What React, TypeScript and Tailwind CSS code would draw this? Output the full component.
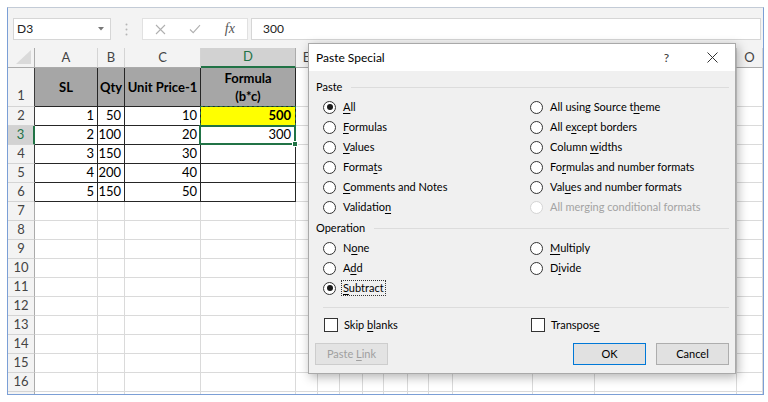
import React from 'react';

// column letters after the row header; O takes the rest of the width
const COLS = ['A', 'B', 'C', 'D', 'E', 'F', 'G', 'H', 'I', 'J', 'K', 'L', 'M', 'N', 'O'];
// F..N sit under the dialog, their letters never show
const HIDDEN = ['F', 'G', 'H', 'I', 'J', 'K', 'L', 'M', 'N'];
const ROWS = Array.from({ length: 16 }, (_, i) => i + 1);

const DATA: Record<number, string[]> = {
  2: ['1', '50', '10', '500'],
  3: ['2', '100', '20', '300'],
  4: ['3', '150', '30', ''],
  5: ['4', '200', '40', ''],
  6: ['5', '150', '50', ''],
};

// underlined access key
const K = ({ children }: { children: React.ReactNode }) => (
  <span className="underline underline-offset-[2px]">{children}</span>
);

const Radio = ({
  label,
  checked,
  disabled,
  focus,
}: {
  label: React.ReactNode;
  checked?: boolean;
  disabled?: boolean;
  focus?: boolean;
}) => (
  <div className="flex items-center h-[20px]">
    <span
      className={`w-[13px] h-[13px] rounded-full border bg-white flex items-center justify-center shrink-0 ${
        disabled ? 'border-[#d4d4d4]' : 'border-[#333333]'
      }`}
    >
      {checked && <span className="w-[6px] h-[6px] rounded-full bg-[#1a1a1a]" />}
    </span>
    <span
      className={`ml-[5px] px-px leading-[14px] border ${focus ? 'border-dotted border-[#333333]' : 'border-transparent'} ${
        disabled ? 'text-[#a3a3a3]' : 'text-black'
      }`}
    >
      {label}
    </span>
  </div>
);

const Check = ({ label }: { label: React.ReactNode }) => (
  <div className="flex items-center h-[20px]">
    <span className="w-[14px] h-[14px] border border-[#333333] bg-white shrink-0" />
    <span className="ml-[6px] text-black">{label}</span>
  </div>
);

const GroupHead = ({ title }: { title: string }) => (
  <div className="flex items-center gap-[9px] h-[16px]">
    <span className="text-black">{title}</span>
    <span className="flex-1 h-px bg-[#dcdcdc]" />
  </div>
);

const cellClass = (r: number, c: number) => {
  const inTable = r <= 6 && c <= 4;
  if (r === 1 && inTable)
    return 'flex items-center justify-center text-center font-bold leading-[18px] text-black bg-[#a6a6a6] border-r border-b border-[#262626]';
  if (r === 2 && c === 4)
    return 'relative flex items-center justify-end pr-[4px] font-bold text-black bg-[#ffff00] border-r border-b border-[#262626]';
  if (r === 3 && c === 4)
    return 'relative flex items-center justify-end pr-[4px] text-black bg-white border-r border-b border-[#262626]';
  if (inTable) return 'flex items-center justify-end pr-[3px] text-black bg-white border-r border-b border-[#262626]';
  return 'bg-white border-r border-b border-[#dadada]';
};

const headerText: Record<number, React.ReactNode> = {
  1: 'SL',
  2: 'Qty',
  3: 'Unit Price-1',
  4: (
    <>
      Formula
      <br />
      (b*c)
    </>
  ),
};

const Sheet = () => (
  <div className="grid grid-cols-[27px_63px_27px_76px_95px_22px_22px_23px_21px_24px_21px_24px_80px_62px_142px_1fr] grid-rows-[20px_39px_repeat(15,19px)] flex-1 overflow-hidden font-['Lato',sans-serif] text-[13px]">
    {/* corner */}
    <div className="bg-[#f3f3f3] border-r border-b border-[#ababab] flex items-end justify-end">
      <svg width="18" height="16" viewBox="0 0 18 16" className="mr-[2px] mb-[2px]">
        <polygon points="17,1 17,15 2,15" fill="#dadada" />
      </svg>
    </div>
    {COLS.map((l, i) =>
      i === 3 ? (
        <div
          key={l}
          className="bg-[#d2d2d2] text-[#217346] border-r border-r-[#ababab] border-b-2 border-b-[#217346] flex items-center justify-center"
        >
          {l}
        </div>
      ) : (
        <div
          key={l}
          className="bg-[#f3f3f3] text-[#444444] border-r border-r-[#d4d4d4] border-b border-b-[#ababab] flex items-center justify-center overflow-hidden"
        >
          {HIDDEN.includes(l) ? null : l}
        </div>
      )
    )}
    {ROWS.map((r) => (
      <React.Fragment key={r}>
        {r === 3 ? (
          <div className="bg-[#d2d2d2] text-[#217346] border-b border-b-[#d4d4d4] border-r-2 border-r-[#217346] flex items-center justify-center">
            {r}
          </div>
        ) : r === 1 ? (
          <div className="bg-[#f3f3f3] text-[#444444] border-b border-b-[#d4d4d4] border-r border-r-[#3a3a3a] flex items-end justify-center pb-[1px]">
            {r}
          </div>
        ) : r <= 6 ? (
          <div className="bg-[#f3f3f3] text-[#444444] border-b border-b-[#d4d4d4] border-r border-r-[#3a3a3a] flex items-center justify-center">
            {r}
          </div>
        ) : (
          <div className="bg-[#f3f3f3] text-[#444444] border-b border-b-[#d4d4d4] border-r border-r-[#ababab] flex items-center justify-center">
            {r}
          </div>
        )}
        {COLS.map((l, i) => {
          const c = i + 1;
          const text = r === 1 ? headerText[c] : DATA[r]?.[c - 1];
          return (
            <div key={l} className={cellClass(r, c)}>
              {text}
              {r === 2 && c === 4 && (
                <span className="absolute -top-px -left-px -right-px -bottom-px border border-dashed border-[#217346] z-10" />
              )}
              {r === 3 && c === 4 && (
                <span className="absolute -top-px -left-[2px] -right-px -bottom-px border-2 border-[#217346] z-10">
                  <span className="absolute -right-[4px] -bottom-[4px] w-[6px] h-[6px] bg-[#217346] border border-white" />
                </span>
              )}
            </div>
          );
        })}
      </React.Fragment>
    ))}
    {/* partly shown row under 16 */}
    <div className="bg-[#f3f3f3] border-r border-[#ababab]" />
    {COLS.map((l) => (
      <div key={l} className="bg-white border-r border-[#dadada]" />
    ))}
  </div>
);

const FormulaBar = () => (
  <div className="h-[40px] shrink-0 bg-[#f3f3f3] flex items-start pt-[10px] pl-[5px] pr-[2px] font-['Lato',sans-serif] text-[12px] text-[#222222]">
    <div className="w-[98px] h-[22px] bg-white border border-[#d6d6d6] flex items-center pl-[3px] pr-[6px]">
      <span>D3</span>
      <svg width="6" height="4" viewBox="0 0 6 4" className="ml-auto">
        <polygon points="0,0 6,0 3,3.5" fill="#777777" />
      </svg>
    </div>
    <div className="w-[31px] h-[22px] flex items-center justify-center">
      <svg width="3" height="13" viewBox="0 0 3 13">
        <circle cx="1.5" cy="1.5" r="1" fill="#b5b5b5" />
        <circle cx="1.5" cy="6.5" r="1" fill="#b5b5b5" />
        <circle cx="1.5" cy="11.5" r="1" fill="#b5b5b5" />
      </svg>
    </div>
    <div className="w-[106px] h-[22px] bg-white border border-[#e1e1e1] flex items-center">
      <div className="w-[35px] flex justify-center">
        <svg width="11" height="11" viewBox="0 0 11 11">
          <path d="M1 1L10 10M10 1L1 10" stroke="#b0b0b0" strokeWidth="1.1" />
        </svg>
      </div>
      <div className="w-[36px] flex justify-center">
        <svg width="12" height="10" viewBox="0 0 12 10">
          <path d="M1 5.5L4.2 8.6L11 1.2" stroke="#b0b0b0" strokeWidth="1.1" fill="none" />
        </svg>
      </div>
      <div className="w-[35px] flex justify-center">
        <span className="font-['Liberation_Serif',serif] italic text-[14px] text-[#555555] leading-none">fx</span>
      </div>
    </div>
    <div className="ml-[3px] flex-1 h-[22px] bg-white border border-[#d6d6d6] flex items-center pl-[11px]">300</div>
  </div>
);

const PasteSpecial = () => (
  <div className="absolute left-[308px] top-[43px] w-[428px] h-[331px] border border-[#a9a9a9] bg-[#f0f0f0] shadow-[2px_3px_10px_rgba(0,0,0,0.3)] flex flex-col z-20 font-['Lato',sans-serif] text-[11px]">
    <div className="h-[27px] bg-white flex items-center pl-[7px] shrink-0">
      <span className="text-[12px] text-black">Paste Special</span>
      <span className="ml-auto text-[12px] text-[#333333]">?</span>
      <svg width="11" height="11" viewBox="0 0 11 11" className="ml-[38px] mr-[17px]">
        <path d="M0.5 0.5L10.5 10.5M10.5 0.5L0.5 10.5" stroke="#333333" strokeWidth="1" />
      </svg>
    </div>
    <div className="flex-1 pl-[7px] pr-[6px]">
      <div className="mt-[8px]">
        <GroupHead title="Paste" />
      </div>
      <div className="mt-[2px] grid grid-cols-[207px_1fr] pl-[7px]">
        <Radio label={<><K>A</K>ll</>} checked />
        <Radio label={<>All using Source t<K>h</K>eme</>} />
        <Radio label={<><K>F</K>ormulas</>} />
        <Radio label={<>All e<K>x</K>cept borders</>} />
        <Radio label={<><K>V</K>alues</>} />
        <Radio label={<>Column <K>w</K>idths</>} />
        <Radio label={<>Forma<K>t</K>s</>} />
        <Radio label={<>Fo<K>r</K>mulas and number formats</>} />
        <Radio label={<><K>C</K>omments and Notes</>} />
        <Radio label={<>Val<K>u</K>es and number formats</>} />
        <Radio label={<>Validatio<K>n</K></>} />
        <Radio label="All merging conditional formats" disabled />
      </div>
      <div className="mt-[3px]">
        <GroupHead title="Operation" />
      </div>
      <div className="mt-[2px] grid grid-cols-[207px_1fr] pl-[7px]">
        <Radio label={<>N<K>o</K>ne</>} />
        <Radio label={<><K>M</K>ultiply</>} />
        <Radio label={<>A<K>d</K>d</>} />
        <Radio label={<>D<K>i</K>vide</>} />
        <Radio label={<><K>S</K>ubtract</>} checked focus />
      </div>
      <div className="mt-[9px] ml-[7px] h-px bg-[#dcdcdc]" />
      <div className="mt-[7px] grid grid-cols-[207px_1fr] pl-[8px]">
        <Check label={<>Skip <K>b</K>lanks</>} />
        <Check label={<>Transpos<K>e</K></>} />
      </div>
      <div className="mt-[8px] flex">
        <button className="-ml-px w-[73px] h-[22px] border border-[#cdcdcd] bg-[#e3e3e3] text-[#a0a0a0]">
          Paste <K>L</K>ink
        </button>
        <button className="ml-auto w-[73px] h-[22px] border border-[#0078d7] bg-[#e1e1e1] text-black">OK</button>
        <button className="ml-[10px] w-[73px] h-[22px] border border-[#adadad] bg-[#e1e1e1] text-black">Cancel</button>
      </div>
    </div>
  </div>
);

export default function App() {
  return (
    <div className="relative w-[768px] h-[402px] bg-white overflow-hidden">
      <div className="h-[7px]" />
      <div className="ml-[7px] w-[757px] h-[388px] border border-[#7b9fd6] border-t-[#c3cbd6] flex flex-col overflow-hidden">
        <FormulaBar />
        <Sheet />
      </div>
      <PasteSpecial />
    </div>
  );
}
